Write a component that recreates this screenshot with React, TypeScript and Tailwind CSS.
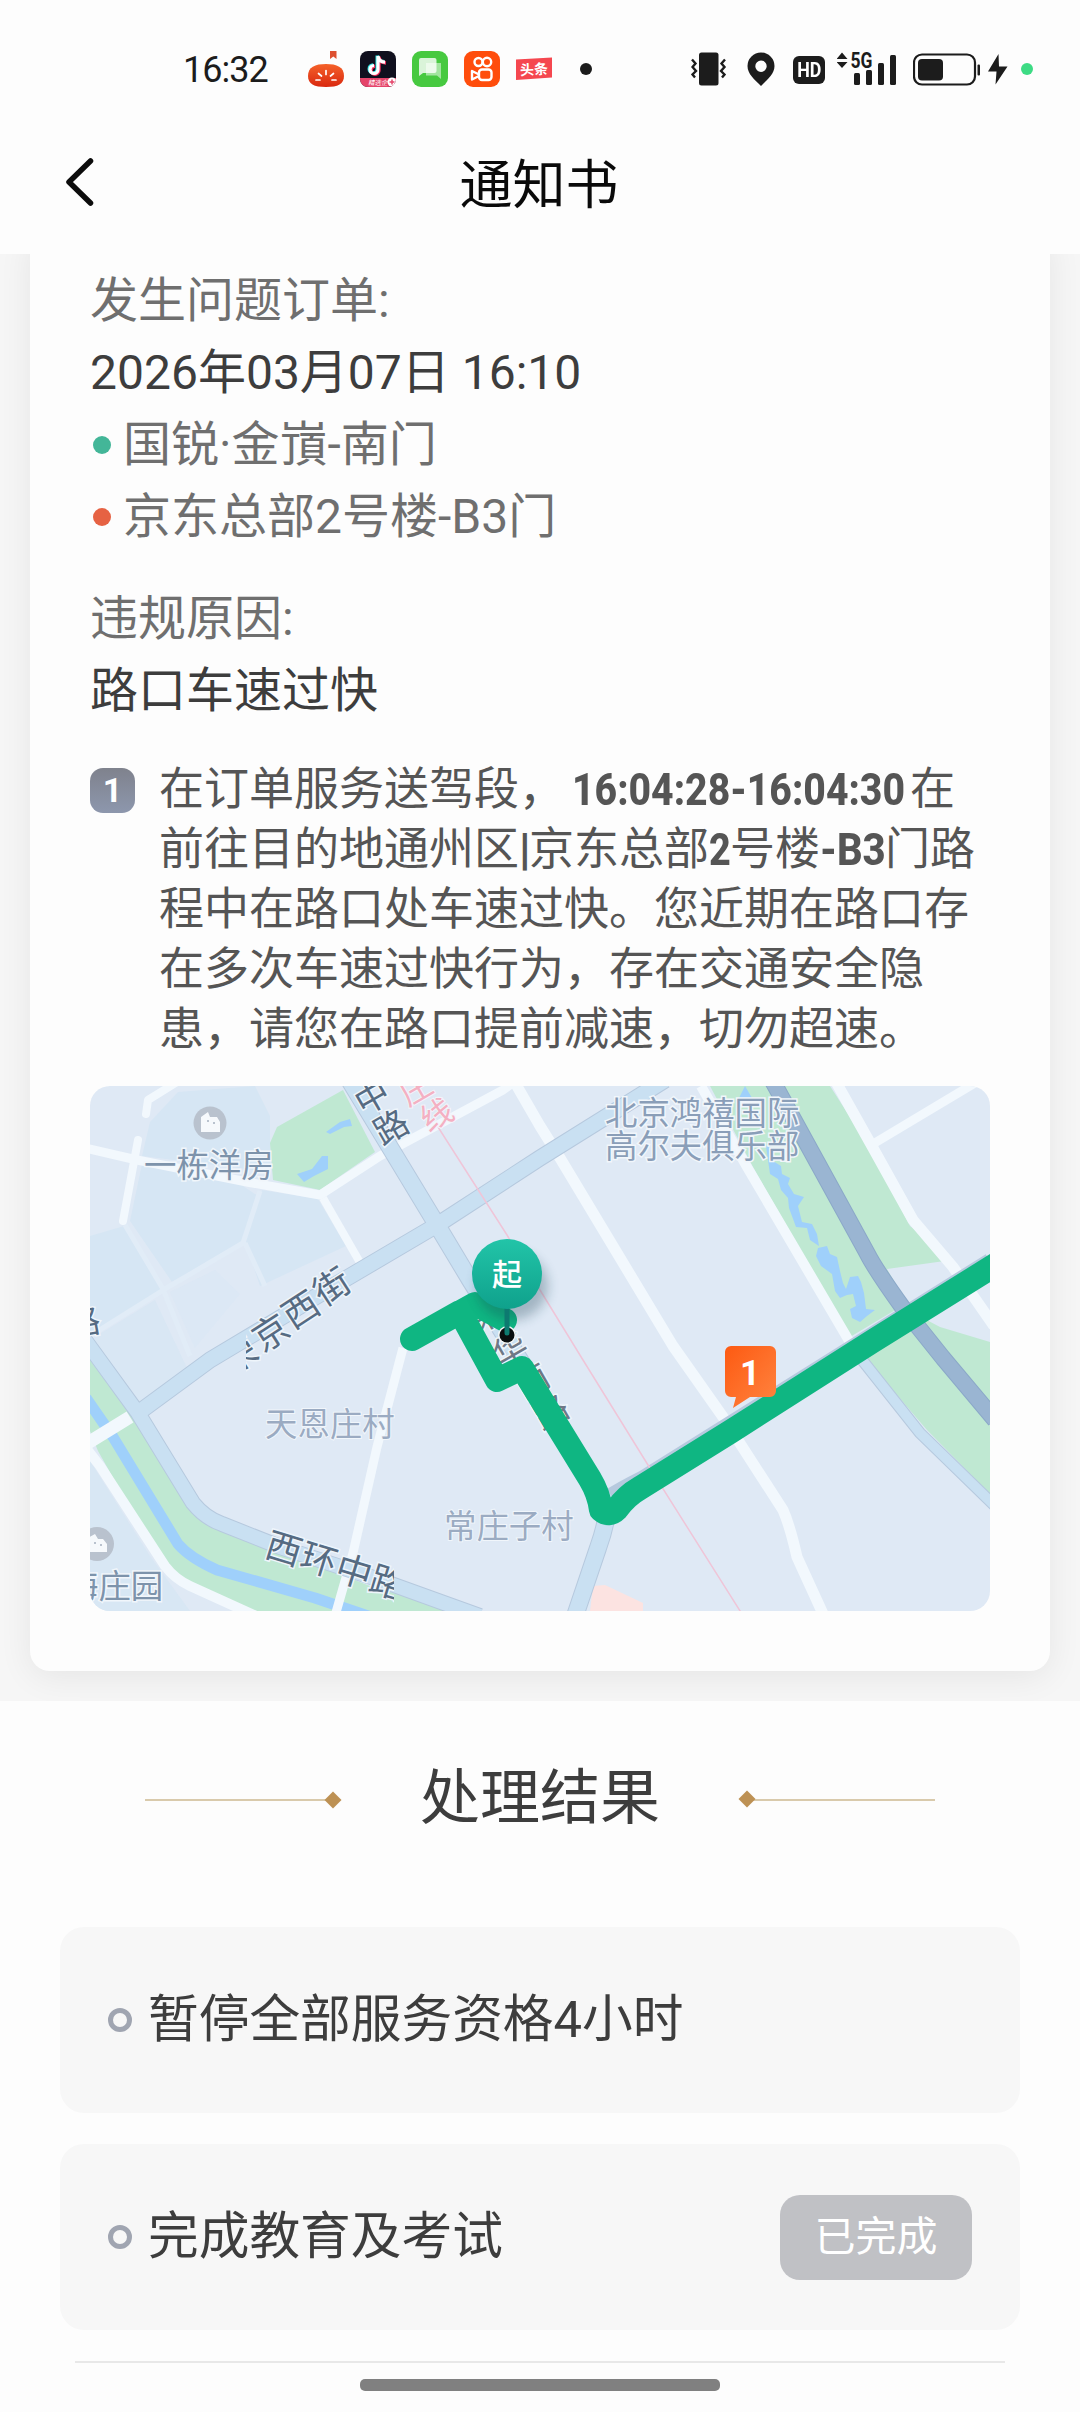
import React from 'react';

const RESULTS = [
  { id: 1, title: '暂停全部服务资格4小时', done: false },
  { id: 2, title: '完成教育及考试', done: true },
];

const StatusBar: React.FC = () => (
  <div className="flex h-[114px] items-center pt-6 text-[#1c1c1c]">
    <span className="ml-[183px] w-[125px] pt-px text-[36px] leading-9 tracking-[-1px]">16:32</span>
    <div className="flex items-center gap-4">
      {/* tomato */}
      <svg width="36" height="36" viewBox="0 0 36 36">
        <defs>
          <linearGradient id="tomato" x1="0" y1="0" x2="0" y2="1">
            <stop offset="0" stopColor="#f5622a" />
            <stop offset="1" stopColor="#d9280f" />
          </linearGradient>
        </defs>
        <path d="M22 0h6.500v8l-3.200-2.500L22 8z" fill="#dd5030" />
        <path d="M18 13c11 0 18 3 18 12 0 8-6 11-18 11S0 33 0 25c0-9 7-12 18-12z" fill="url(#tomato)" />
        <path d="M8 29l4 0M10.500 22.500l3 2.500M18 19.500v4M25.500 22.500l-3 2.500M28 29l-4 0" stroke="#fff" strokeWidth="1.700" strokeLinecap="round" />
      </svg>
      {/* short video */}
      <svg width="36" height="36" viewBox="0 0 36 36">
        <defs>
          <clipPath id="dy"><rect width="36" height="36" rx="8" /></clipPath>
        </defs>
        <g clipPath="url(#dy)">
          <rect width="36" height="36" fill="#10101e" />
          <path d="M18 5v13.500a4 4 0 1 1-4-4M18 5c.6 4 3 6 7 6.200" fill="none" stroke="#2fe6e4" strokeWidth="3.400" transform="translate(-.8 -.6)" />
          <path d="M18 5v13.500a4 4 0 1 1-4-4M18 5c.6 4 3 6 7 6.200" fill="none" stroke="#f5305c" strokeWidth="3.400" transform="translate(1 .8)" />
          <path d="M18 5v13.500a4 4 0 1 1-4-4M18 5c.6 4 3 6 7 6.200" fill="none" stroke="#fff" strokeWidth="3.200" />
          <rect y="27" width="36" height="9" fill="#e5446a" />
          <text x="8" y="34" fontSize="6.500" fill="#fff" fontStyle="italic">精选企</text>
          <circle cx="32" cy="31" r="4.500" fill="#fff" />
          <path d="M32 28.500v5M29.500 31h5" stroke="#e5446a" strokeWidth="1.500" />
        </g>
      </svg>
      {/* messages */}
      <svg width="36" height="36" viewBox="0 0 36 36">
        <rect width="36" height="36" rx="9" fill="#47c940" />
        <path d="M14 12h15v16l-4-3.500H14z" fill="#fff" fillOpacity=".5" />
        <path d="M9 7h13.500a2 2 0 0 1 2 2v11a2 2 0 0 1-2 2H11l-4 3V9a2 2 0 0 1 2-2z" fill="#fff" fillOpacity=".8" />
      </svg>
      {/* camera */}
      <svg width="36" height="36" viewBox="0 0 36 36" fill="none" stroke="#fff" strokeWidth="2.400">
        <rect width="36" height="36" rx="9" fill="#ff4d0c" stroke="none" />
        <circle cx="14.500" cy="11" r="4" />
        <circle cx="23" cy="11" r="4.200" />
        <rect x="15" y="18.500" width="12.500" height="10.500" rx="3" />
        <path d="M15 23.500l-7-3.500v8.500l7-3.500" strokeLinejoin="round" />
      </svg>
      {/* headlines */}
      <svg width="36" height="36" viewBox="0 0 36 36">
        <path d="M0 8.500L36 6.500V26.500L0 29z" fill="#f5474f" />
        <text x="18" y="23.500" fontSize="14" fontWeight="700" fill="#fff" textAnchor="middle" transform="rotate(-3 18 18)">头条</text>
      </svg>
    </div>
    <span className="ml-[28px] size-3 rounded-full bg-[#1c1c1c]" />
    <svg className="ml-[99px]" width="36" height="36" viewBox="0 0 36 36" fill="none" stroke="#1c1c1c" strokeWidth="2.400">
      <rect x="8" y="1.500" width="19.500" height="33" rx="2.500" fill="#1c1c1c" stroke="none" />
      <path d="M1 8.500l3.500 4L1.500 16l3.500 4-3.500 3.500 2.500 3M34 8.500l-3.500 4 3 3.500-3.500 4 3.500 3.500-2.500 3" />
    </svg>
    <svg className="ml-5" width="28" height="36" viewBox="0 0 28 36">
      <path fillRule="evenodd" d="M14 1.500a13.500 13.500 0 0 1 13.500 13.500c0 8-7 13.500-13.500 20C7.500 28.500.5 23 .5 15A13.500 13.500 0 0 1 14 1.500zm0 8a5.700 5.700 0 1 0 0 11.400 5.700 5.700 0 0 0 0-11.400z" fill="#1c1c1c" />
    </svg>
    <span className="ml-[18px] mt-[2px] flex h-7 w-8 items-center justify-center rounded-[6px] bg-[#1c1c1c]">
      <span className="scale-x-[.85] text-[21px] font-bold leading-7 text-white">HD</span>
    </span>
    <svg className="ml-3" width="60" height="36" viewBox="0 0 60 36" fill="#1c1c1c">
      <path d="M5 1.500L10.500 8H-.5zM5 17L10.500 11H-.5z" />
      <rect x="17" y="22" width="6" height="12" rx="1.500" />
      <rect x="29" y="19" width="6" height="15" rx="1.500" />
      <rect x="41" y="12" width="6" height="22" rx="1.500" />
      <rect x="53" y="4" width="6" height="30" rx="1.500" />
      <text x="13.500" y="17" fontSize="21.500" fontWeight="700" textLength="22" lengthAdjust="spacingAndGlyphs" stroke="#fdfdfd" strokeWidth="2" paintOrder="stroke">5G</text>
    </svg>
    <svg className="ml-4" width="68" height="36" viewBox="0 0 68 36">
      <rect x="1" y="3.500" width="61" height="30" rx="8" fill="none" stroke="#1c1c1c" strokeWidth="2.200" />
      <rect x="5" y="8" width="25" height="21.500" rx="4" fill="#1c1c1c" />
      <rect x="64.500" y="13.500" width="2.500" height="11" rx="1" fill="#1c1c1c" />
    </svg>
    <svg className="ml-[6px]" width="22" height="36" viewBox="0 0 22 36">
      <path d="M11.500 3L1 20.500h8.500L8.500 33.500 20.500 15.500H12z" fill="#1c1c1c" />
    </svg>
    <span className="ml-3 size-3 rounded-full bg-[#3ddb84]" />
  </div>
);

const Header: React.FC = () => (
  <div className="flex h-[140px] items-center px-[62px]">
    <svg width="34" height="50" viewBox="0 0 34 50" className="-mt-[5px]">
      <path d="M28.500 4L7 25l21.500 21" fill="none" stroke="#0c0c0c" strokeWidth="5.500" strokeLinecap="round" strokeLinejoin="round" />
    </svg>
    <h1 className="flex-1 pr-[36px] pt-1 text-center text-[53px] leading-[72px] text-[#0a0a0a]">通知书</h1>
  </div>
);

interface GlyphProps {
  x: number;
  y: number;
  r: number;
  children: string;
}

const Glyph: React.FC<GlyphProps> = ({ x, y, r, children }) => (
  <text x={x} y={y + 12.5} textAnchor="middle" transform={`rotate(${r} ${x} ${y})`}>{children}</text>
);

const RouteMap: React.FC = () => (
  <svg width="900" height="525" viewBox="0 0 900 525" className="block rounded-[20px]">
    <defs>
      <linearGradient id="pin" x1="0" y1="0" x2="0" y2="1">
        <stop offset="0" stopColor="#22c4a8" />
        <stop offset="1" stopColor="#0fa18c" />
      </linearGradient>
      <linearGradient id="flag" x1="0" y1="0" x2="1" y2="1">
        <stop offset="0" stopColor="#fd5a12" />
        <stop offset="1" stopColor="#ff8440" />
      </linearGradient>
      <filter id="shade" x="-50%" y="-50%" width="200%" height="200%">
        <feGaussianBlur stdDeviation="6" />
      </filter>
      <clipPath id="jing"><rect x="156" y="150" width="160" height="150" /></clipPath>
      <clipPath id="huan"><rect x="150" y="420" width="154" height="105" /></clipPath>
    </defs>
    <rect width="900" height="525" fill="#dfe9f5" />

    {/* blocks */}
    <g fill="#d6e6f4">
      <path d="M88 6L165 0 180 30 180 86 52 70 60 36z" />
      <path d="M52 78L150 98 168 110 152 157 82 196 40 135z" />
      <path d="M172 104L228 113 256 160 170 200 155 155z" />
      <path d="M0 150L34 140 74 204 0 250z" />
      <path d="M80 206L125 184 150 208 105 262z" opacity=".4" />
      <path d="M0 254L65 214 98 284 52 318z" opacity=".7" />
      <path d="M0 375L60 470 100 525H0z" opacity=".8" />
    </g>

    {/* parks */}
    <g fill="#bfe8d2">
      <path d="M187 41L253 4 285 66 230 104 183 94 180 57z" />
      <path d="M620 0H740L783 67 820 140 862 174 797 183 817 217 760 251 663 81z" />
      <path d="M775 272L833 232 850 241 900 256V408L837 344z" />
      <path d="M0 274L45 335 95 415 125 440 190 465 280 500 365 525H160L95 500 70 475 8 365 0 345z" />
    </g>
    <path d="M503 500L515 499 553 517V525H500z" fill="#fce3e1" />

    {/* water */}
    <path d="M-4 312L23 351 88 458Q100 472 127 484L225 512 290 534" fill="none" stroke="#9fd0fb" strokeWidth="11" strokeLinejoin="round" />
    <g fill="#9fd0fb">
      <path d="M649 12L655 0 662 12z" />
      <path d="M676 60L681 60 683 75 691 80 692 88 700 92 698 98 704 108 714 111 708 120 712 136 722 138 727 148 729 160 720 154 717 142 706 141 699 122 698 112 691 104 688 93 680 88z" />
      <path d="M728 162L737 160 740 168 747 171 750 185 753 197 756 203 760 191 768 190 771 196 774 207 776 223 785 224 777 230 770 236 762 232 760 223 766 220 763 208 757 209 750 212 745 205 742 188 731 180 726 170z" />
      <path d="M207 88L222 83 232 70 238 70 238 83 224 90 214 96z" />
      <path d="M236 46L250 36 260 33 262 40 254 41 240 48z" />
    </g>

    {/* minor roads */}
    <g fill="none" stroke="#e1ecf7" strokeWidth="5">
      <path d="M170 105L153 157 80 200 0 250M35 139L73 203 100 270M155 157L175 200" />
    </g>
    <g fill="none" stroke="#f2f8fd" strokeLinejoin="round">
      <path d="M-5 62L47 74 157 96 230 109 290 70 413 4 425 -5" strokeWidth="9" />
      <path d="M56 28L58 14 87 -4M48 54L33 135" strokeWidth="8" strokeLinecap="round" />
      <path d="M233 112L272 180" strokeWidth="8" />
      <path d="M424 -5L450 40 470 72 583 260 633 331 693 424Q700 440 707 471L734 530" strokeWidth="11" />
      <path d="M611 0L657 81 765 265" strokeWidth="10" />
      <path d="M746 -4L783 62 823 134 863 181 904 240" strokeWidth="11" />
      <path d="M783 58L885 -3" strokeWidth="9" />
      <path d="M313 262L287 361 263 467 245 530" strokeWidth="9" />
      <path d="M-4 358L40 331" strokeWidth="13" />
      <path d="M-4 362L10 380 75 480Q85 493 100 500L175 534" strokeWidth="10" />
    </g>

    {/* main roads, casing then fill */}
    <g fill="none" strokeLinejoin="round">
      <g stroke="#b6c9de">
        <path d="M258 -8L347 139 380 194 440 290 518 420Q516 440 508 462L485 530" strokeWidth="18" />
        <path d="M575 -6L450 72 347 139 257 192 120 274 52 324" strokeWidth="17" />
        <path d="M-8 250L48 327 103 417Q115 432 132 438L190 461 290 494 390 530" strokeWidth="16" />
        <path d="M518 412Q530 404 552 393L900 175" strokeWidth="16" />
        <path d="M765 265L830 347 905 420" strokeWidth="12" />
      </g>
      <g stroke="#c9e0f2">
        <path d="M258 -8L347 139 380 194 440 290 518 420Q516 440 508 462L485 530" strokeWidth="16" />
        <path d="M575 -6L450 72 347 139 257 192 120 274 52 324" strokeWidth="15" />
        <path d="M-8 250L48 327 103 417Q115 432 132 438L190 461 290 494 390 530" strokeWidth="14" />
        <path d="M765 265L830 347 905 420" strokeWidth="10" />
      </g>
      <path d="M682 -6L777 167Q785 183 813 222L853 272 905 334" stroke="#8ba8c8" strokeWidth="17" />
      <path d="M682 -6L777 167Q785 183 813 222L853 272 905 334" stroke="#9ab5d2" strokeWidth="15" />
      <path d="M348 41L417 149 450 204 493 274 558 379 652 528" stroke="#efc5d8" strokeWidth="1.500" />
    </g>

    {/* place icons */}
    <g fill="#b9c2ce">
      <circle cx="120" cy="37" r="16.500" />
      <circle cx="7" cy="458" r="17" />
    </g>
    <path d="M111 46V31l7-5 2 5h7l3 5v10z" fill="#f6f9fc" />
    <path d="M-2 466v-14l7-4 3 5h5l4 5v8z" fill="#f6f9fc" />
    <path d="M117 35h2M123 37h2M4 457h2M10 459h2" stroke="#b9c2ce" strokeWidth="2" />

    {/* street names */}
    <g fontSize="34" fill="#566b82" stroke="#eef5fb" strokeWidth="3" paintOrder="stroke">
      <Glyph x={282} y={11} r={-30}>中</Glyph>
      <Glyph x={301} y={41} r={-30}>路</Glyph>
      <g fill="#6f7886">
        <Glyph x={395} y={230} r={-30}>荣</Glyph>
        <Glyph x={420} y={264} r={-30}>华</Glyph>
        <Glyph x={442} y={295} r={-30}>南</Glyph>
        <Glyph x={461} y={326} r={-30}>路</Glyph>
      </g>
      <Glyph x={-7} y={236} r={-10}>路</Glyph>
      <g clipPath="url(#jing)" fontSize="36">
        <Glyph x={149} y={270} r={-33}>荣</Glyph>
        <Glyph x={181} y={247} r={-33}>京</Glyph>
        <Glyph x={211} y={224} r={-33}>西</Glyph>
        <Glyph x={242} y={201} r={-33}>街</Glyph>
      </g>
      <g clipPath="url(#huan)" fontSize="36">
        <Glyph x={194} y={463} r={17}>西</Glyph>
        <Glyph x={229} y={474} r={17}>环</Glyph>
        <Glyph x={264} y={486} r={17}>中</Glyph>
        <Glyph x={298} y={497} r={17}>路</Glyph>
      </g>
    </g>
    <g fontSize="32" fill="#f4b0c2" stroke="#f3f4fa" strokeWidth="2" paintOrder="stroke">
      <Glyph x={325} y={2} r={-30}>庄</Glyph>
      <Glyph x={346} y={28} r={-30}>线</Glyph>
    </g>

    {/* place names */}
    <g fontSize="32.400" fill="#7d93ab" stroke="#f1f6fb" strokeWidth="3" paintOrder="stroke">
      <text x="54" y="91">一栋洋房</text>
      <text x="-24" y="512">海庄园</text>
      <g fill="#8a9eb8">
        <text x="515" y="39">北京鸿禧国际</text>
        <text x="515" y="72">高尔夫俱乐部</text>
      </g>
      <g fill="#9babc2" strokeWidth="2">
        <text x="175" y="350">天恩庄村</text>
        <text x="354" y="452">常庄子村</text>
      </g>
    </g>

    {/* driven route */}
    <path
      d="M415 234L385 218 322 253 370 226 407 294 432 282 465 336 500 393Q509 408 511 424Q519 431 527 423Q536 410 550 402L640 346 783 255 910 176"
      fill="none"
      stroke="#0fb682"
      strokeWidth="24"
      strokeLinecap="round"
      strokeLinejoin="round"
    />

    {/* start pin */}
    <ellipse cx="422" cy="200" rx="36" ry="34" fill="#123c50" opacity=".3" filter="url(#shade)" />
    <circle cx="417" cy="249" r="9" fill="#f2f5f5" />
    <circle cx="417" cy="249" r="7.500" fill="#0a0f10" />
    <path d="M417 220V247" stroke="#0d7a70" strokeWidth="5" strokeLinecap="round" />
    <circle cx="417" cy="188" r="35" fill="url(#pin)" />
    <text x="417" y="199" fontSize="30" fontWeight="500" fill="#fff" textAnchor="middle">起</text>

    {/* violation marker */}
    <path d="M641 260h39a6 6 0 0 1 6 6v39a6 6 0 0 1-6 6H660L643 322 646 311H641a6 6 0 0 1-6-6V266a6 6 0 0 1 6-6z" fill="url(#flag)" />
    <text x="660" y="299" fontSize="35" fontWeight="700" fill="#fff" textAnchor="middle">1</text>
  </svg>
);

const NoticeCard: React.FC = () => (
  <main className="h-[1447px] overflow-hidden bg-[#f6f6f6] px-[30px]">
    <div className="-mt-6 h-[1441px] rounded-[20px] bg-[#fdfdfd] px-[60px] pt-[35px] shadow-[0_6px_34px_rgba(0,0,0,0.07)]">
      <section className="text-[48px] leading-[72px] text-[#6f6f6f]">
        <p>发生问题订单:</p>
        <p className="text-[#3d3d3d]">2026年03月07日 16:10</p>
        <p className="flex items-center">
          <span className="ml-[3px] mr-3 size-[18px] rounded-full bg-[#43b698]" />
          国锐·金嵿-南门
        </p>
        <p className="flex items-center">
          <span className="ml-[3px] mr-3 size-[18px] rounded-full bg-[#e66243]" />
          京东总部2号楼-B3门
        </p>
      </section>
      <section className="mt-[30px] text-[48px] leading-[72px] text-[#6f6f6f]">
        <p>违规原因:</p>
        <p className="text-[#3d3d3d]">路口车速过快</p>
      </section>
      <section className="mt-[33px] flex gap-6">
        <span className="mt-2 flex size-[45px] items-center justify-center rounded-[13px] bg-linear-to-b from-[#7f828d] to-[#8d97ad] text-[34px] font-bold leading-[45px] text-white">
          1
        </span>
        <div className="whitespace-nowrap text-[45px] leading-[60px] text-[#555]">
          <p className="flex">
            在订单服务送驾段，
            <b className="ml-[8px] mr-[10px] w-[328px]">
              <span className="inline-block origin-left scale-x-[.87] font-extrabold">16:04:28-16:04:30</span>
            </b>
            在
          </p>
          <p className="flex">
            前往目的地通州区
            <b className="w-[10px] font-black">|</b>
            京东总部
            <b className="w-[21px]"><span className="inline-block origin-left scale-x-[.84] font-extrabold">2</span></b>
            号楼
            <b className="w-[65px]"><span className="inline-block origin-left scale-x-[.89] font-extrabold">-B3</span></b>
            门路
          </p>
          <p>程中在路口处车速过快。您近期在路口存</p>
          <p>在多次车速过快行为，存在交通安全隐</p>
          <p>患，请您在路口提前减速，切勿超速。</p>
        </div>
      </section>
      <div className="mt-[26px]">
        <RouteMap />
      </div>
    </div>
  </main>
);

const ResultSection: React.FC = () => (
  <section className="px-[60px]">
    <div className="flex h-[226px] items-center justify-center pb-[31px]">
      <span className="mt-[2px] h-[2px] w-[186px] bg-[#d9caac]" />
      <span className="-ml-1 mt-[2px] size-[12px] rotate-45 bg-[#bd9154]" />
      <h2 className="mx-[81px] text-[60px] leading-[80px] text-[#3d3d3d]">处理结果</h2>
      <span className="-mr-1 size-[12px] rotate-45 bg-[#bd9154]" />
      <span className="mt-[2px] h-[2px] w-[186px] bg-[#d9caac]" />
    </div>
    <div className="flex flex-col gap-[31px]">
      {RESULTS.map((item) => (
        <div key={item.id} className="flex h-[186px] items-center rounded-[24px] bg-[#f7f7f7] px-12">
          <span className="size-6 rounded-full border-[5px] border-[#a0a5b1]" />
          <span className="ml-4 flex-1 text-[50.700px] leading-[76px] text-[#3d3d3d]">{item.title}</span>
          {item.done && (
            <button className="h-[85px] w-48 rounded-[20px] bg-[#c0c1c5] text-[41px] leading-[60px] text-white">已完成</button>
          )}
        </div>
      ))}
    </div>
    <div className="mx-[15px] mt-[31px] h-[2px] bg-[#e8e8e8]" />
  </section>
);

const App: React.FC = () => {
  return (
    <div className="flex h-[2412px] w-[1080px] flex-col overflow-hidden bg-[#fdfdfd] font-[Roboto,'Noto_Sans_CJK_SC',sans-serif]">
      <StatusBar />
      <Header />
      <NoticeCard />
      <ResultSection />
      <div className="mx-auto mb-[21px] mt-auto h-3 w-[360px] rounded-[5px] bg-[#808080]" />
    </div>
  );
};

export default App;
